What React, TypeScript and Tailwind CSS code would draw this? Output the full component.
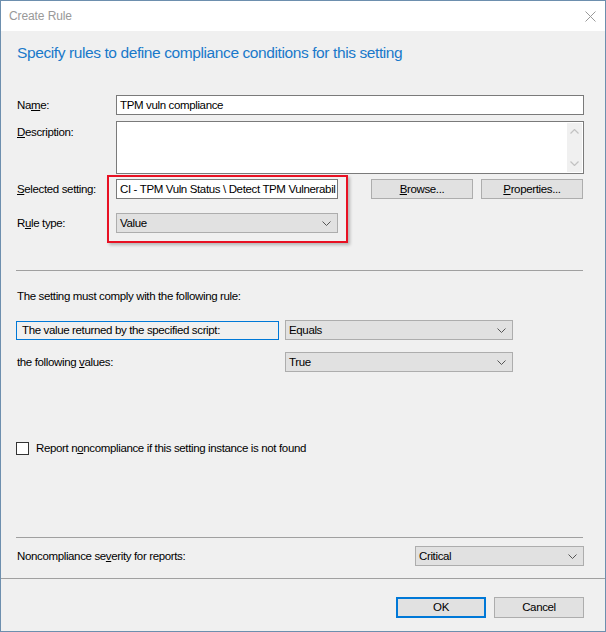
import React from 'react';

const font = { fontFamily: '"Liberation Sans", Arial, sans-serif' };

function Chevron() {
  return (
    <svg width="9" height="5" viewBox="0 0 9 5" className="shrink-0">
      <path d="M0.5 0.5 L4.5 4.5 L8.5 0.5" fill="none" stroke="#555" strokeWidth="1" />
    </svg>
  );
}

function Select({ value, className }: { value: string; className: string }) {
  return (
    <div className={`flex items-center justify-between h-[20px] border border-[#adadad] bg-[#e1e1e1] pl-[3px] pr-[6px] pt-px text-black ${className}`}>
      <span>{value}</span>
      <Chevron />
    </div>
  );
}

function Button({ children, primary }: { children: React.ReactNode; primary?: boolean }) {
  return (
    <div
      className={`flex items-center justify-center h-[21px] w-[90px] bg-[#e1e1e1] text-black ${
        primary ? 'border-2 border-[#0078d7]' : 'border border-[#adadad]'
      }`}
    >
      {children}
    </div>
  );
}

export default function App() {
  return (
    <div style={font} className="w-[606px] h-[632px] border border-[#6d8fae] flex flex-col bg-[#f0f0f0] text-[11.5px] tracking-[-0.36px] text-black overflow-hidden">
      {/* Title bar */}
      <div className="h-[30px] bg-white flex items-center justify-between pl-[8px] pr-[9px] shrink-0">
        <span className="text-[12px] tracking-[-0.1px] text-[#999]">Create Rule</span>
        <svg width="11" height="11" viewBox="0 0 11 11">
          <path d="M0.5 0.5 L10.5 10.5 M10.5 0.5 L0.5 10.5" stroke="#999" strokeWidth="1" />
        </svg>
      </div>

      <div className="relative flex-1 flex flex-col">
        <div className="flex flex-col pl-[15px] pr-[21px]">
          <h1 className="mt-[12px] h-[20px] leading-[20px] pl-[1px] text-[15.5px] tracking-[-0.4px] text-[#1979ca] font-normal">
            Specify rules to define compliance conditions for this setting
          </h1>

          {/* Name */}
          <div className="mt-[32px] flex items-center">
            <span className="w-[100px] pl-[1px] pt-px">
              Na<u>m</u>e:
            </span>
            <div className="flex-1 h-[20px] border border-[#7a7a7a] bg-white flex items-center pl-[3px] pt-px">TPM vuln compliance</div>
          </div>

          {/* Description */}
          <div className="mt-[6px] flex items-start">
            <span className="w-[100px] pl-[1px] pt-[3px]">
              <u>D</u>escription:
            </span>
            <div className="flex-1 h-[53px] border border-[#7a7a7a] bg-white flex justify-end p-[1px]">
              <div className="w-[15px] h-full bg-[#f0f0f0] flex flex-col items-center justify-between py-[6px]">
                <svg width="9" height="5" viewBox="0 0 9 5">
                  <path d="M0.5 4.5 L4.5 0.5 L8.5 4.5" fill="none" stroke="#c2c2c2" strokeWidth="1.2" />
                </svg>
                <svg width="9" height="5" viewBox="0 0 9 5">
                  <path d="M0.5 0.5 L4.5 4.5 L8.5 0.5" fill="none" stroke="#c2c2c2" strokeWidth="1.2" />
                </svg>
              </div>
            </div>
          </div>

          {/* Selected setting */}
          <div className="mt-[5px] flex items-center">
            <span className="w-[100px] pl-[1px] pt-px">
              <u>S</u>elected setting:
            </span>
            <div className="w-[222px] h-[20px] border border-[#7a7a7a] bg-white flex items-center pl-[3px] pt-px overflow-hidden whitespace-nowrap">
              CI - TPM Vuln Status \ Detect TPM Vulnerabil
            </div>
            <div className="ml-[33px] flex gap-[8px]">
              <div className="flex items-center justify-center h-[20px] w-[102px] border border-[#adadad] bg-[#e1e1e1] pt-px">
                <span>
                  <u>B</u>rowse...
                </span>
              </div>
              <div className="flex items-center justify-center h-[20px] w-[102px] border border-[#adadad] bg-[#e1e1e1] pt-px">
                <span>
                  <u>P</u>roperties...
                </span>
              </div>
            </div>
          </div>

          {/* Rule type */}
          <div className="mt-[14px] flex items-center">
            <span className="w-[100px] pl-[1px] pt-px">
              R<u>u</u>le type:
            </span>
            <Select value="Value" className="w-[222px]" />
          </div>

          <div className="mt-[37px] h-px bg-[#a0a0a0] w-[567px]" />

          <div className="mt-[17px] h-[16px] leading-[16px] pl-[1px]">The setting must comply with the following rule:</div>

          <div className="mt-[16px] flex items-center">
            <div className="w-[263px] h-[19px] border border-[#0078d7] flex items-center pl-[5px] pt-px">The value returned by the specified script:</div>
            <Select value="Equals" className="ml-[6px] w-[228px]" />
          </div>

          <div className="mt-[12px] flex items-center">
            <span className="w-[269px] pl-[1px] pt-px">
              the following <u>v</u>alues:
            </span>
            <Select value="True" className="w-[228px]" />
          </div>

          <div className="mt-[70px] flex items-center h-[13px]">
            <div className="w-[13px] h-[13px] border border-[#333] bg-white" />
            <span className="ml-[7px]">
              Report n<u>o</u>ncompliance if this setting instance is not found
            </span>
          </div>

          <div className="mt-[82px] h-px bg-[#a0a0a0] w-[567px]" />

          <div className="mt-[8px] flex items-center justify-between">
            <span className="pl-[1px] pt-px">
              Noncompliance se<u>v</u>erity for reports:
            </span>
            <Select value="Critical" className="w-[169px]" />
          </div>
        </div>

        <div className="mt-[12px] h-px bg-[#a0a0a0]" />

        <div className="mt-[18px] flex justify-end gap-[8px] pr-[21px]">
          <Button primary>OK</Button>
          <Button>Cancel</Button>
        </div>

        {/* Annotation highlight */}
        <div className="absolute left-[106px] top-[144px] w-[241px] h-[68px] border-2 border-[#e81123] shadow-[2px_2px_3px_rgba(0,0,0,0.25)] pointer-events-none" />
      </div>
    </div>
  );
}
